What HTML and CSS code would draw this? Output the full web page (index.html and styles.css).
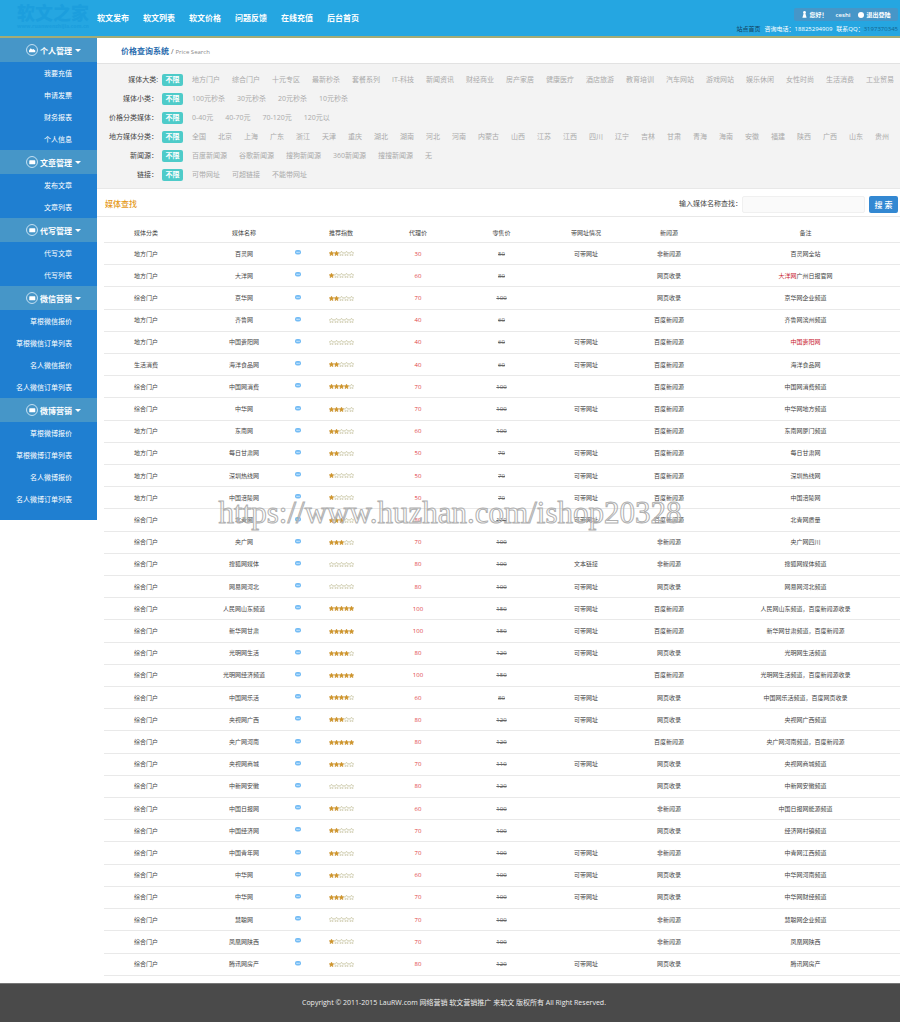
FILE: index.html
```html
<!DOCTYPE html>
<html lang="zh-CN">
<head>
    <meta charset="UTF-8">
    <meta name="viewport" content="width=device-width, initial-scale=1.0">
    <title>价格查询系统</title>
    <link rel="stylesheet" href="styles.css">
</head>
<body>
    <svg class="sprite" aria-hidden="true">
        <symbol id="star" viewBox="0 0 10 10"><path d="M5 .2l1.4 3 3.3.4-2.4 2.2.7 3.5L5 7.6 2 9.3l.7-3.5L.3 3.6l3.3-.4z"/></symbol>
        <symbol id="info" viewBox="0 0 12 10"><rect x="0" y="0" width="12" height="9" rx="4" fill="#74bcf5"/><path d="M3 3.5h2.4v2.4H3zM6.8 3.5h2.4v2.4H6.8z" fill="#d6ecfd"/></symbol>
        <symbol id="folder" viewBox="0 0 22 22"><circle cx="11" cy="11" r="10" fill="none" stroke="#d9ecf8" stroke-width="1.6"/><rect x="6" y="8" width="11" height="7" rx="1" fill="#fff"/></symbol>
        <symbol id="cloud" viewBox="0 0 22 22"><circle cx="11" cy="11" r="10" fill="none" stroke="#d9ecf8" stroke-width="1.6"/><path d="M5.5 15v-3l3-4 3 2 2-1 3.5 3v3z" fill="#fff"/></symbol>
        <symbol id="user" viewBox="0 0 10 14"><circle cx="5" cy="3" r="2.8"/><path d="M3.2 5h3.6l2.4 8.5H.8z"/></symbol>
    </svg>

    <header class="header">
        <a class="logo" href="#">软文之家<small>www.ruanwenzhijia.com.cn</small></a>
        <nav class="nav">
            <a href="#">软文发布</a>
            <a href="#">软文列表</a>
            <a href="#">软文价格</a>
            <a href="#">问题反馈</a>
            <a href="#">在线充值</a>
            <a href="#">后台首页</a>
        </nav>
        <div class="account">
            <div class="user-box">
                <span><svg class="user-icon"><use href="#user"/></svg>您好！</span>
                <a href="#">ceshi</a>
                <a href="#"><i class="dot"></i>退出登陆</a>
            </div>
            <div class="contact">
                <a class="home" href="#">站点首页</a>
                <span>咨询电话：18825294909</span>
                <span>联系QQ：<a class="qq" href="#">3197370345</a></span>
            </div>
        </div>
    </header>

    <div class="layout">
        <aside class="sidebar">
            <button class="menu-title" type="button"><svg><use href="#cloud"/></svg>个人管理<i class="caret"></i></button>
            <ul>
                <li><a href="#">我要充值</a></li>
                <li><a href="#">申请发票</a></li>
                <li><a href="#">财务报表</a></li>
                <li><a href="#">个人信息</a></li>
            </ul>
            <button class="menu-title" type="button"><svg><use href="#folder"/></svg>文章管理<i class="caret"></i></button>
            <ul>
                <li><a href="#">发布文章</a></li>
                <li><a href="#">文章列表</a></li>
            </ul>
            <button class="menu-title" type="button"><svg><use href="#folder"/></svg>代写管理<i class="caret"></i></button>
            <ul>
                <li><a href="#">代写文章</a></li>
                <li><a href="#">代写列表</a></li>
            </ul>
            <button class="menu-title" type="button"><svg><use href="#folder"/></svg>微信营销<i class="caret"></i></button>
            <ul>
                <li><a href="#">草根微信报价</a></li>
                <li><a href="#">草根微信订单列表</a></li>
                <li><a href="#">名人微信报价</a></li>
                <li><a href="#">名人微信订单列表</a></li>
            </ul>
            <button class="menu-title" type="button"><svg><use href="#folder"/></svg>微博营销<i class="caret"></i></button>
            <ul>
                <li><a href="#">草根微博报价</a></li>
                <li><a href="#">草根微博订单列表</a></li>
                <li><a href="#">名人微博报价</a></li>
                <li><a href="#">名人微博订单列表</a></li>
            </ul>
        </aside>

        <main class="main">
            <h1 class="crumb">价格查询系统 <span>/ <small>Price Search</small></span></h1>

            <section class="filters" id="filters"></section>

            <form class="search">
                <h2>媒体查找</h2>
                <label for="keyword">输入媒体名称查找：</label>
                <input type="text" id="keyword">
                <button type="submit">搜 索</button>
            </form>

            <table class="media">
                <colgroup>
                    <col class="col-type">
                    <col class="col-name">
                    <col class="col-info">
                    <col class="col-stars">
                    <col class="col-agent">
                    <col class="col-retail">
                    <col class="col-url">
                    <col class="col-news">
                    <col>
                </colgroup>
                <thead>
                    <tr>
                        <th>媒体分类</th>
                        <th>媒体名称</th>
                        <th></th>
                        <th>推荐指数</th>
                        <th>代理价</th>
                        <th>零售价</th>
                        <th>带网址情况</th>
                        <th>新闻源</th>
                        <th>备注</th>
                    </tr>
                </thead>
                <tbody id="mediaRows"></tbody>
            </table>
        </main>
    </div>

    <footer class="footer">Copyright © 2011-2015 LauRW.com 网络营销 软文营销推广 来软文 版权所有 All Right Reserved.</footer>

    <div class="watermark">https://www.huzhan.com/ishop20328</div>

    <script src="script.js"></script>
</body>
</html>
```

FILE: styles.css
```css
* {
    box-sizing: border-box;
}

body {
    display: flex;
    flex-direction: column;
    position: relative;
    min-height: 100vh;
    margin: 0;
    font-family: "Open Sans", "Noto Sans CJK SC", sans-serif;
    font-size: 6px;
    line-height: 10px;
    color: #444;
    background: #fff;
}

a {
    color: inherit;
    text-decoration: none;
}

ul {
    list-style: none;
    margin: 0;
    padding: 0;
}

button {
    border: none;
    font-family: inherit;
    cursor: pointer;
}

.sprite {
    position: absolute;
    width: 0;
    height: 0;
}

/* Cabecera */
.header {
    display: flex;
    height: 38px;
    background: #25a6e1;
    border-bottom: 2px solid #a3ac76;
    color: #fff;
}

.logo {
    width: 97px;
    padding: 4px 0 0 17px;
    color: #1c9edd;
    font-size: 18px;
    font-weight: 900;
    line-height: 18px;
}

.logo small {
    display: block;
    font-size: 5px;
    line-height: 8px;
}

.nav {
    display: flex;
    align-items: center;
    gap: 14px;
    font-size: 8px;
    font-weight: bold;
}

.account {
    display: flex;
    flex-direction: column;
    align-items: flex-end;
    gap: 3px;
    margin-left: auto;
    padding: 8px 2px 0 0;
}

.user-box {
    display: flex;
    align-items: center;
    justify-content: center;
    gap: 8px;
    width: 104px;
    height: 13px;
    border-radius: 2px;
    background: #4696c8;
    font-weight: 600;
}

.user-icon {
    width: 5px;
    height: 7px;
    margin-right: 3px;
    vertical-align: middle;
    fill: #fff;
}

.dot {
    display: inline-block;
    width: 6px;
    height: 6px;
    margin-right: 2px;
    border-radius: 50%;
    background: #fff;
    vertical-align: middle;
}

.contact {
    display: flex;
    gap: 4px;
}

.home {
    color: #12425f;
}

.qq {
    color: #16658f;
}

.layout {
    display: flex;
    flex: 1;
}

/* Menu lateral */
.sidebar {
    align-self: flex-start;
    flex: none;
    width: 97px;
    padding-bottom: 10px;
    background: #1f7fd1;
    color: #fff;
}

.menu-title {
    display: flex;
    align-items: center;
    width: 100%;
    height: 24px;
    padding: 0 0 0 26px;
    background: #4696c8;
    color: #fff;
    font-size: 8px;
    font-weight: bold;
}

.menu-title svg {
    width: 12px;
    height: 12px;
    margin-right: 2px;
}

.caret {
    margin-left: 3px;
    border: 3px solid transparent;
    border-top-color: #fff;
    border-bottom: 0;
}

.sidebar li {
    height: 22px;
    padding-right: 25px;
    font-size: 7px;
    line-height: 24px;
    text-align: right;
}

.main {
    display: flex;
    flex: 1;
    flex-direction: column;
    min-width: 0;
    padding-bottom: 7px;
}

.crumb {
    height: 25px;
    margin: 0;
    padding-left: 24px;
    color: #2a6cae;
    font-size: 8px;
    line-height: 25px;
}

.crumb span {
    color: #555;
    font-size: 7px;
    font-weight: normal;
}

.crumb small {
    color: #888;
    font-size: 6px;
}

/* Filtros */
.filters {
    padding: 6px 0 4px;
    border-top: 1px solid #e2e2e2;
    border-bottom: 1px solid #e8e8e8;
    background: #f3f3f3;
    font-size: 7px;
}

.filter {
    display: flex;
    align-items: center;
    height: 19px;
    margin: 0;
    color: #aaa;
    white-space: nowrap;
    overflow: hidden;
}

.filter b {
    flex: none;
    width: 61px;
    margin-right: 4px;
    color: #444;
    font-weight: normal;
    text-align: right;
}

.filter a {
    flex: none;
    margin-right: 12px;
}

.filter .active {
    width: 21px;
    margin-right: 9px;
    border-radius: 2px;
    background: #4ecbc9;
    color: #fff;
    font-weight: bold;
    line-height: 12px;
    text-align: center;
}

.search {
    display: flex;
    align-items: center;
    height: 28px;
    padding: 3px 2px 0 8px;
    border-bottom: 1px solid #e8e8e8;
    font-size: 7px;
}

.search h2 {
    margin: 0 auto 0 0;
    color: #e59a1c;
    font-size: 8px;
    font-weight: 500;
}

.search input {
    width: 123px;
    height: 17px;
    margin-right: 4px;
    padding: 0 4px;
    border: 1px solid #f0f0f0;
    border-radius: 2px;
    background: #fafafa;
    font-size: 7px;
}

.search button {
    width: 29px;
    height: 17px;
    padding: 0;
    border-radius: 2px;
    background: #3388d2;
    color: #fff;
    font-size: 8px;
    font-weight: 500;
}

/* Tabla de medios */
.media {
    flex: 1;
    align-self: stretch;
    width: calc(100% - 7px);
    margin-left: 7px;
    border-spacing: 0;
    table-layout: fixed;
}

.media th,
.media td {
    height: 22px;
    padding: 0;
    border-bottom: 1px solid #e9e9e9;
    font-weight: normal;
    text-align: center;
    white-space: nowrap;
}

.media th {
    height: 26px;
    padding-top: 6px;
}

.media th:first-child,
.media td:first-child {
    padding-right: 8px;
}

.col-type {
    width: 92px;
}

.col-name {
    width: 96px;
}

.col-info {
    width: 12px;
}

.col-stars {
    width: 74px;
}

.col-agent {
    width: 80px;
}

.col-retail {
    width: 87px;
}

.col-url {
    width: 82px;
}

.col-news {
    width: 84px;
}

.info {
    display: block;
    width: 6px;
    height: 5px;
    margin: 0 auto 2px;
}

.stars {
    display: flex;
    justify-content: center;
}

.stars svg {
    width: 5px;
    height: 5px;
    fill: none;
    stroke: #b9b48a;
    overflow: visible;
}

.stars .on {
    fill: #d0962c;
    stroke: #c8902c;
}

.media .agent {
    color: #e0403f;
}

.media del {
    color: #666;
}

.red {
    color: #c8202f;
}

.footer {
    height: 39px;
    padding-left: 8px;
    border-top: 1px solid #777;
    background: #4a4a4a;
    color: #eee;
    font-size: 7px;
    line-height: 38px;
    text-align: center;
}

.watermark {
    position: absolute;
    top: 496px;
    left: 0;
    right: 0;
    color: transparent;
    font-family: "Liberation Serif", serif;
    font-size: 31px;
    line-height: 34px;
    text-align: center;
    -webkit-text-stroke: 1px #b0b0b0;
    pointer-events: none;
}
```

FILE: script.js
```js
const filters = [
    ['媒体大类:', '地方门户 综合门户 十元专区 最新秒杀 套餐系列 IT-科技 新闻资讯 财经商业 房产家居 健康医疗 酒店旅游 教育培训 汽车网站 游戏网站 娱乐休闲 女性时尚 生活消费 工业贸易'],
    ['媒体小类：', '100元秒杀 30元秒杀 20元秒杀 10元秒杀'],
    ['价格分类媒体：', '0-40元 40-70元 70-120元 120元以'],
    ['地方媒体分类：', '全国 北京 上海 广东 浙江 天津 重庆 湖北 湖南 河北 河南 内蒙古 山西 江苏 江西 四川 辽宁 吉林 甘肃 青海 海南 安徽 福建 陕西 广西 山东 贵州'],
    ['新闻源：', '百度新闻源 谷歌新闻源 搜狗新闻源 360新闻源 搜搜新闻源 无'],
    ['链接：', '可带网址 可超链接 不能带网址']
];

const D = '地方门户', Z = '综合门户';
const URL_OK = '可带网址';
const BAIDU = '百度新闻源', NOT = '非新闻源', WEB = '网页收录';

// tipo, nombre, estrellas, precio agente, precio venta, url, fuente, nota
const media = [
    [D, '百灵网', 2, 30, 50, URL_OK, NOT, '百灵网全站'],
    [D, '大洋网', 1, 60, 80, '', WEB, '<span class="red">大洋网</span>广州日报官网'],
    [Z, '京华网', 2, 70, 100, '', WEB, '京华网企业频道'],
    [D, '齐鲁网', 0, 40, 60, '', BAIDU, '齐鲁网滨州频道'],
    [D, '中国贵阳网', 0, 40, 60, URL_OK, BAIDU, '<span class="red">中国贵阳网</span>'],
    ['生活消费', '海洋食品网', 2, 40, 60, URL_OK, BAIDU, '海洋食品网'],
    [Z, '中国网消费', 4, 70, 100, '', BAIDU, '中国网消费频道'],
    [Z, '中华网', 3, 70, 100, URL_OK, BAIDU, '中华网地方频道'],
    [D, '东南网', 2, 60, 100, '', BAIDU, '东南网厦门频道'],
    [D, '每日甘肃网', 2, 50, 70, URL_OK, BAIDU, '每日甘肃网'],
    [D, '深圳热线网', 1, 50, 70, URL_OK, BAIDU, '深圳热线网'],
    [D, '中国涪陵网', 1, 50, 70, URL_OK, BAIDU, '中国涪陵网'],
    [Z, '北青网', 3, 80, 110, URL_OK, BAIDU, '北青网质量'],
    [Z, '央广网', 3, 70, 100, '', NOT, '央广网四川'],
    [Z, '搜狐网媒体', 0, 80, 100, '文本链接', NOT, '搜狐网媒体频道'],
    [Z, '网易网河北', 0, 80, 100, URL_OK, WEB, '网易网河北频道'],
    [Z, '人民网山东频道', 5, 100, 150, URL_OK, BAIDU, '人民网山东频道，百度新闻源收录'],
    [Z, '新华网甘肃', 5, 100, 150, URL_OK, BAIDU, '新华网甘肃频道，百度新闻源'],
    [Z, '光明网生活', 4, 80, 120, URL_OK, WEB, '光明网生活频道'],
    [Z, '光明网经济频道', 5, 100, 150, '', BAIDU, '光明网生活频道，百度新闻源收录'],
    [Z, '中国网乐活', 4, 60, 80, URL_OK, WEB, '中国网乐活频道，百度网页收录'],
    [Z, '央视网广西', 3, 80, 120, URL_OK, WEB, '央视网广西频道'],
    [Z, '央广网河南', 5, 80, 120, '', BAIDU, '央广网河南频道，百度新闻源'],
    [Z, '央视网商城', 3, 70, 110, URL_OK, WEB, '央视网商城频道'],
    [Z, '中新网安徽', 0, 80, 120, '', WEB, '中新网安徽频道'],
    [Z, '中国日报网', 2, 60, 100, '', NOT, '中国日报网能源频道'],
    [Z, '中国经济网', 2, 70, 100, '', WEB, '经济网村镇频道'],
    [Z, '中国青年网', 2, 70, 100, URL_OK, NOT, '中青网江西频道'],
    [Z, '中华网', 2, 60, 100, URL_OK, WEB, '中华网河南频道'],
    [Z, '中华网', 3, 70, 100, URL_OK, WEB, '中华网财经频道'],
    [Z, '慧聪网', 0, 70, 100, '', NOT, '慧聪网企业频道'],
    [Z, '凤凰网陕西', 1, 70, 100, '', NOT, '凤凰网陕西'],
    [Z, '腾讯网房产', 1, 80, 120, URL_OK, WEB, '腾讯网房产']
];

document.getElementById('filters').innerHTML = filters.map(([label, options]) => `
    <p class="filter">
        <b>${label}</b>
        <a class="active" href="#">不限</a>
        ${options.split(' ').map(option => `<a href="#">${option}</a>`).join('')}
    </p>
`).join('');

function stars(count) {
    let html = '';
    for (let i = 0; i < 5; i++) {
        html += `<svg class="${i < count ? 'on' : ''}"><use href="#star"/></svg>`;
    }
    return html;
}

document.getElementById('mediaRows').innerHTML = media.map(([type, name, count, agent, retail, url, news, note]) => `
    <tr>
        <td>${type}</td>
        <td>${name}</td>
        <td><svg class="info"><use href="#info"/></svg></td>
        <td><div class="stars">${stars(count)}</div></td>
        <td class="agent">${agent}</td>
        <td><del>${retail}</del></td>
        <td>${url}</td>
        <td>${news}</td>
        <td>${note}</td>
    </tr>
`).join('');
```
